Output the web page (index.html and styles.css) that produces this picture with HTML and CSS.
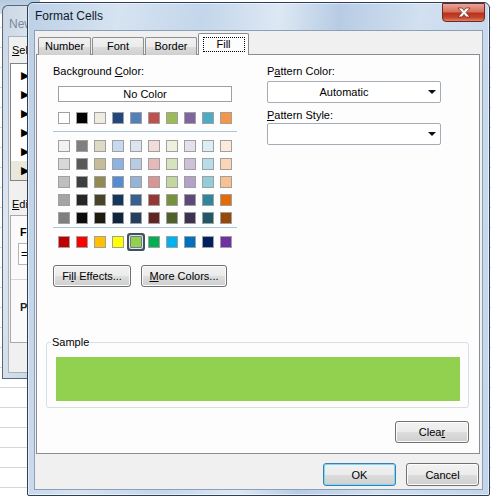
FILE: index.html
```html
<!DOCTYPE html>
<html>
<head>
<meta charset="utf-8">
<link rel="stylesheet" href="styles.css">
</head>
<body>
<div class="desktop">
  <div class="sheet"></div>
  <div class="excel-glass"></div>

  <div class="bgwin">
    <div class="bgwin-title">New</div>
    <div class="bgwin-client">
      <div class="bg-label"><u>S</u>ele</div>
      <div class="rulelist">
        <div class="rule">▶</div>
        <div class="rule">▶</div>
        <div class="rule">▶</div>
        <div class="rule">▶</div>
        <div class="rule">▶</div>
        <div class="rule sel">▶</div>
      </div>
      <div class="bg-label edit"><u>E</u>dit</div>
      <div class="descbox">
        <div class="desc-h">F</div>
        <div class="formula">=</div>
        <div class="desc-line"></div>
        <div class="desc-h prev">P</div>
      </div>
    </div>
  </div>

  <div class="dialog">
    <div class="titlebar">
      <span class="title">Format Cells</span>
      <span class="close">
        <svg width="16" height="11" viewBox="0 0 16 11"><path d="M2 1 L6 1 L8 3.5 L10 1 L14 1 L10 5.5 L14 10 L10 10 L8 7.5 L6 10 L2 10 L6 5.5 Z" fill="#fff" stroke="#7a2a20" stroke-width="0.8"/></svg>
      </span>
    </div>
    <div class="client">
      <div class="tabs">
        <div class="tab t-number">Number</div>
        <div class="tab t-font">Font</div>
        <div class="tab t-border">Border</div>
        <div class="tab t-fill active"><span class="focus">Fill</span></div>
      </div>
      <div class="panel">
        <div class="top">
          <div class="leftcol">
            <div class="label">Background <u>C</u>olor:</div>
            <div class="nocolor">No Color</div>
            <div class="swrow first">
              <span class="sw" style="background:#ffffff"></span>
              <span class="sw" style="background:#000000"></span>
              <span class="sw" style="background:#eeece1"></span>
              <span class="sw" style="background:#1f497d"></span>
              <span class="sw" style="background:#4f81bd"></span>
              <span class="sw" style="background:#c0504d"></span>
              <span class="sw" style="background:#9bbb59"></span>
              <span class="sw" style="background:#8064a2"></span>
              <span class="sw" style="background:#4bacc6"></span>
              <span class="sw" style="background:#f79646"></span>
            </div>
            <div class="sep"></div>
            <div class="grid">
              <span class="sw" style="background:#f2f2f2"></span>
              <span class="sw" style="background:#7f7f7f"></span>
              <span class="sw" style="background:#ddd9c3"></span>
              <span class="sw" style="background:#c6d9f0"></span>
              <span class="sw" style="background:#dbe5f1"></span>
              <span class="sw" style="background:#f2dcdb"></span>
              <span class="sw" style="background:#ebf1dd"></span>
              <span class="sw" style="background:#e5e0ec"></span>
              <span class="sw" style="background:#dbeef3"></span>
              <span class="sw" style="background:#fdeada"></span>

              <span class="sw" style="background:#d8d8d8"></span>
              <span class="sw" style="background:#595959"></span>
              <span class="sw" style="background:#c4bd97"></span>
              <span class="sw" style="background:#8db3e2"></span>
              <span class="sw" style="background:#b8cce4"></span>
              <span class="sw" style="background:#e5b9b7"></span>
              <span class="sw" style="background:#d7e3bc"></span>
              <span class="sw" style="background:#ccc1d9"></span>
              <span class="sw" style="background:#b7dde8"></span>
              <span class="sw" style="background:#fbd5b5"></span>

              <span class="sw" style="background:#bfbfbf"></span>
              <span class="sw" style="background:#3f3f3f"></span>
              <span class="sw" style="background:#938953"></span>
              <span class="sw" style="background:#548dd4"></span>
              <span class="sw" style="background:#95b3d7"></span>
              <span class="sw" style="background:#d99694"></span>
              <span class="sw" style="background:#c3d69b"></span>
              <span class="sw" style="background:#b2a2c7"></span>
              <span class="sw" style="background:#92cddc"></span>
              <span class="sw" style="background:#fac08f"></span>

              <span class="sw" style="background:#a5a5a5"></span>
              <span class="sw" style="background:#262626"></span>
              <span class="sw" style="background:#494429"></span>
              <span class="sw" style="background:#17365d"></span>
              <span class="sw" style="background:#366092"></span>
              <span class="sw" style="background:#953734"></span>
              <span class="sw" style="background:#76923c"></span>
              <span class="sw" style="background:#5f497a"></span>
              <span class="sw" style="background:#31859b"></span>
              <span class="sw" style="background:#e36c09"></span>

              <span class="sw" style="background:#7f7f7f"></span>
              <span class="sw" style="background:#0c0c0c"></span>
              <span class="sw" style="background:#1d1b10"></span>
              <span class="sw" style="background:#0f243e"></span>
              <span class="sw" style="background:#244061"></span>
              <span class="sw" style="background:#632423"></span>
              <span class="sw" style="background:#4f6128"></span>
              <span class="sw" style="background:#3f3151"></span>
              <span class="sw" style="background:#205867"></span>
              <span class="sw" style="background:#974806"></span>
            </div>
            <div class="sep sep2"></div>
            <div class="swrow std">
              <span class="sw" style="background:#c00000"></span>
              <span class="sw" style="background:#ff0000"></span>
              <span class="sw" style="background:#ffc000"></span>
              <span class="sw" style="background:#ffff00"></span>
              <span class="sw selected" style="background:#92d050"></span>
              <span class="sw" style="background:#00b050"></span>
              <span class="sw" style="background:#00b0f0"></span>
              <span class="sw" style="background:#0070c0"></span>
              <span class="sw" style="background:#002060"></span>
              <span class="sw" style="background:#7030a0"></span>
            </div>
            <div class="btnrow">
              <button class="btn fill-effects">Fi<u>l</u>l Effects...</button>
              <button class="btn more-colors"><u>M</u>ore Colors...</button>
            </div>
          </div>
          <div class="rightcol">
            <div class="label">P<u>a</u>ttern Color:</div>
            <div class="combo c1"><span class="combo-text">Automatic</span><span class="arrow"></span></div>
            <div class="label ps"><u>P</u>attern Style:</div>
            <div class="combo c2"><span class="combo-text"></span><span class="arrow"></span></div>
          </div>
        </div>
        <fieldset class="sample">
          <legend>Sample</legend>
          <div class="sample-fill"></div>
        </fieldset>
        <div class="clearrow">
          <button class="btn clear">Clea<u>r</u></button>
        </div>
      </div>
      <div class="footer">
        <button class="btn ok">OK</button>
        <button class="btn cancel">Cancel</button>
      </div>
    </div>
  </div>
</div>
</body>
</html>
```

FILE: styles.css
```css
* { box-sizing: border-box; }
html, body {
  margin: 0;
  padding: 0;
  width: 491px;
  height: 497px;
  overflow: hidden;
  background: #ffffff;
  font-family: "Liberation Sans", Arial, sans-serif;
  font-size: 11px;
  color: #000;
}
u { text-decoration: underline; text-underline-offset: 1px; }

.desktop {
  position: relative;
  width: 491px;
  height: 497px;
  overflow: hidden;
}
.sheet {
  position: absolute;
  left: 0; top: 0; right: 0; bottom: 0;
  background: repeating-linear-gradient(180deg, transparent 0, transparent 7px, #d4d7dc 7px, #d4d7dc 8px, transparent 8px, transparent 20px);
}
.excel-glass {
  position: absolute;
  left: 0; top: 0;
  width: 40px; height: 14px;
  background: linear-gradient(180deg, #b5c9df, #cfdcea);
}

/* background window (mostly hidden behind the dialog) */
.bgwin {
  position: absolute;
  left: 2px; top: 5px;
  width: 40px; height: 374px;
  border: 1px solid #58677a;
  border-right: none;
  border-radius: 6px 0 0 0;
  background: linear-gradient(100deg, #c8d6e4, #dfe7f0 40%, #c5d3e2);
  display: flex;
  flex-direction: column;
  overflow: hidden;
}
.bgwin-title {
  height: 30px;
  padding: 11px 0 0 6px;
  font-size: 12px;
  color: #7b8a9c;
  white-space: nowrap;
}
.bgwin-client {
  flex: 1;
  margin: 0 0 5px 5px;
  background: #f0f0f0;
  border: 1px solid #a6b3c2;
  border-right: none;
  padding: 6px 0 0 1px;
  white-space: nowrap;
}
.bg-label { line-height: 14px; padding-left: 2px; }
.rulelist {
  margin-top: 6px;
  height: 118px;
  background: #fff;
  border: 1px solid #7f8489;
  border-right: none;
  padding-top: 2px;
}
.rule {
  height: 19px;
  line-height: 19px;
  padding-left: 10px;
  font-size: 11px;
}
.rule.sel { background: #e9e8dd; }
.bg-label.edit { margin-top: 16px; }
.descbox {
  margin-top: 4px;
  height: 128px;
  border: 1px solid #a9a9a9;
  border-right: none;
  background: #fafafa;
  padding: 9px 0 0 9px;
}
.desc-h { font-weight: bold; line-height: 14px; }
.desc-h.prev { margin-top: 20px; color: #1e1e1e; }
.formula {
  margin-top: 4px;
  margin-left: -2px;
  height: 22px;
  border: 1px solid #b5b5b5;
  border-right: none;
  background: #fff;
  line-height: 20px;
  padding-left: 2px;
}
.desc-line {
  margin-top: 14px;
  margin-left: -9px;
  border-top: 1px solid #d6d6d6;
}

/* dialog */
.dialog {
  position: absolute;
  left: 27px; top: 2px;
  width: 463px; height: 494px;
  border: 1px solid #2d4058;
  border-radius: 6px 6px 2px 2px;
  background: linear-gradient(95deg, #bcd0e6 0%, #d6e3f1 18%, #c4d6ea 35%, #dde8f4 50%, #b7cce4 62%, #d2e0f0 78%, #c2d5ea 100%);
  display: flex;
  flex-direction: column;
  box-shadow: inset 0 0 0 1px rgba(255,255,255,0.55);
}
.titlebar {
  height: 27px;
  display: flex;
  justify-content: space-between;
  align-items: flex-start;
  padding-left: 7px;
}
.title {
  font-size: 12px;
  line-height: 14px;
  margin-top: 6px;
  color: #0d1a2a;
}
.close {
  width: 43px;
  height: 19px;
  margin-right: 4px;
  margin-top: 0;
  border: 1px solid #6b2a22;
  border-radius: 0 0 4px 4px;
  background: linear-gradient(180deg, #e8a597 0%, #d7705d 45%, #b7321d 55%, #c6452c 80%, #e0826a 100%);
  display: flex;
  align-items: center;
  justify-content: center;
}
.client {
  flex: 1;
  margin: 0 6px 5px 6px;
  border: 1px solid #8d9fb6;
  background: #f0f0f0;
  display: flex;
  flex-direction: column;
}

.tabs {
  display: flex;
  align-items: flex-end;
  height: 24px;
  padding-left: 3px;
  margin-bottom: -1px;
  position: relative;
  z-index: 2;
}
.tab {
  height: 18px;
  margin-right: 1px;
  border: 1px solid #8e8f8f;
  border-bottom: none;
  border-radius: 2px 2px 0 0;
  background: linear-gradient(180deg, #f2f2f2 0%, #ebebeb 50%, #dddddd 51%, #cfcfcf 100%);
  text-align: center;
  line-height: 17px;
  font-size: 11px;
}
.t-number { width: 53px; }
.t-font { width: 52px; }
.t-border { width: 52px; }
.t-fill {
  width: 51px;
  height: 22px;
  background: #fdfdfd;
  border-color: #898c95;
  padding-top: 2px;
}
.focus {
  display: inline-block;
  width: 42px;
  height: 15px;
  line-height: 13px;
  border: 1px dotted #000;
}

.panel {
  margin: 0 2px 0 1px;
  height: 400px;
  border: 1px solid #898c95;
  background: #fdfdfd;
  padding: 9px 10px 0 9px;
  display: flex;
  flex-direction: column;
}
.top {
  display: flex;
  padding-left: 7px;
}
.leftcol { width: 184px; }
.rightcol { width: 174px; margin-left: 30px; }
.label { line-height: 14px; white-space: nowrap; }
.nocolor {
  margin: 8px 0 0 5px;
  width: 174px;
  height: 16px;
  border: 1px solid #a0a0a0;
  background: #fff;
  text-align: center;
  line-height: 14px;
}
.swrow {
  display: flex;
  gap: 6px;
  margin-left: 5px;
  height: 12px;
}
.swrow.first { margin-top: 10px; }
.sw {
  display: block;
  width: 12px;
  height: 12px;
  border: 1px solid #a0a0a0;
}
.sep {
  margin-top: 7px;
  height: 1px;
  background: #a9c7e3;
}
.grid {
  margin: 8px 0 0 5px;
  display: grid;
  grid-template-columns: repeat(10, 12px);
  grid-auto-rows: 12px;
  gap: 6px;
}
.sep2 { margin-top: 3px; }
.swrow.std { margin-top: 8px; }
.sw.selected {
  border-color: #6f7e8c;
  box-shadow: 0 0 0 1px #dfe6ec, 0 0 0 3px #44515d;
  border-radius: 1px;
}
.btnrow {
  display: flex;
  gap: 10px;
  margin-top: 17px;
}

.btn {
  font-family: "Liberation Sans", Arial, sans-serif;
  font-size: 11px;
  color: #000;
  height: 22px;
  padding: 0;
  border: 1px solid #707070;
  border-radius: 3px;
  background: linear-gradient(180deg, #f2f2f2 0%, #ebebeb 50%, #dddddd 51%, #cfcfcf 100%);
  box-shadow: inset 0 0 0 1px #fcfcfc;
  line-height: 20px;
}
.fill-effects { width: 78px; }
.more-colors { width: 86px; }

.combo {
  height: 22px;
  width: 174px;
  border: 1px solid #a5acb5;
  border-radius: 2px;
  background: #fff;
  display: flex;
  align-items: center;
}
.c1 { margin-top: 3px; }
.label.ps { margin-top: 5px; }
.c2 { margin-top: 1px; }
.combo-text {
  flex: 1;
  text-align: center;
  padding-left: 2px;
}
.arrow {
  width: 0; height: 0;
  border-left: 4px solid transparent;
  border-right: 4px solid transparent;
  border-top: 4px solid #0a0e1c;
  margin-right: 4px;
  margin-left: 10px;
}

.sample {
  margin: 48px 0 0 0;
  border: 1px solid #d5dfe5;
  border-radius: 3px;
  padding: 8px 8px 6px 9px;
  min-inline-size: 0;
}
.sample legend {
  padding: 0 1px;
  margin-left: -5px;
  line-height: 14px;
}
.sample-fill {
  height: 44px;
  background: #92d050;
}
.clearrow {
  display: flex;
  justify-content: flex-end;
  margin-top: 13px;
}
.clear { width: 74px; }

.footer {
  display: flex;
  justify-content: flex-end;
  gap: 10px;
  padding: 9px 3px 0 0;
}
.ok, .cancel { width: 73px; height: 23px; }
.ok {
  border-color: #3c7fb1;
  box-shadow: inset 0 0 0 1px #7ad9f5;
}
```
